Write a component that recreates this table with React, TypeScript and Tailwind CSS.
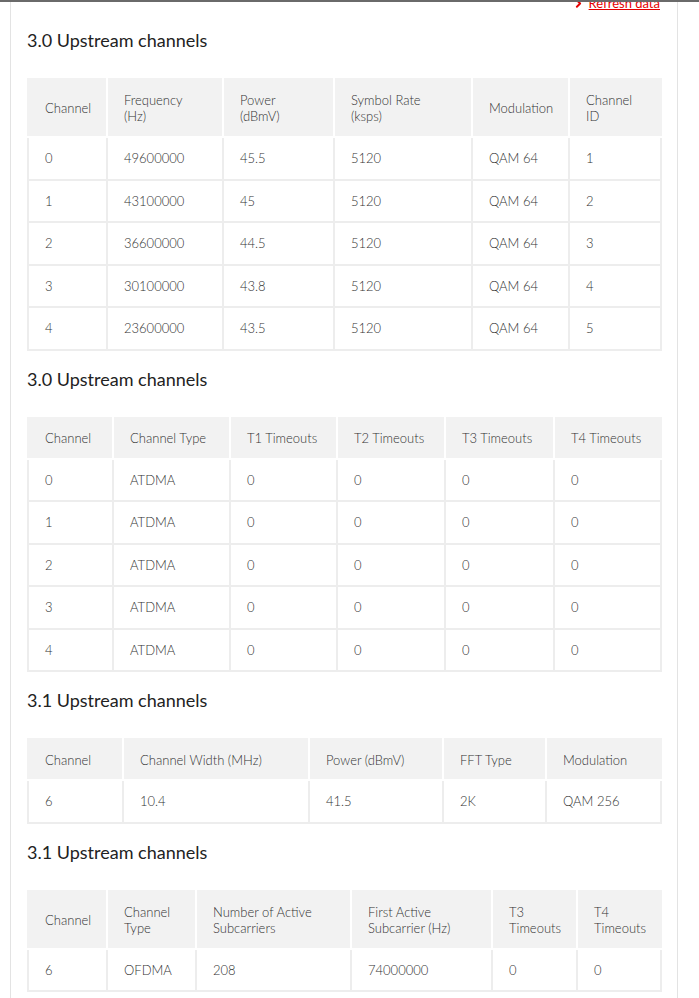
import { Fragment } from "react";
import { ChevronRight } from "lucide-react";

type Table = {
  title: string;
  cols: string[];
  head: string[][];
  rows: string[][];
};

const tables: Table[] = [
  {
    title: "3.0 Upstream channels",
    cols: ["w-[79px]", "w-[116px]", "w-[111px]", "w-[138px]", "w-[97px]", "w-[92px]"],
    head: [["Channel"], ["Frequency", "(Hz)"], ["Power", "(dBmV)"], ["Symbol Rate", "(ksps)"], ["Modulation"], ["Channel", "ID"]],
    rows: [
      ["0", "49600000", "45.5", "5120", "QAM 64", "1"],
      ["1", "43100000", "45", "5120", "QAM 64", "2"],
      ["2", "36600000", "44.5", "5120", "QAM 64", "3"],
      ["3", "30100000", "43.8", "5120", "QAM 64", "4"],
      ["4", "23600000", "43.5", "5120", "QAM 64", "5"],
    ],
  },
  {
    title: "3.0 Upstream channels",
    cols: ["w-[85px]", "w-[117px]", "w-[107px]", "w-[108px]", "w-[109px]", "w-[107px]"],
    head: [["Channel"], ["Channel Type"], ["T1 Timeouts"], ["T2 Timeouts"], ["T3 Timeouts"], ["T4 Timeouts"]],
    rows: [0, 1, 2, 3, 4].map((n) => [String(n), "ATDMA", "0", "0", "0", "0"]),
  },
  {
    title: "3.1 Upstream channels",
    cols: ["w-[95px]", "w-[186px]", "w-[134px]", "w-[103px]", "w-[115px]"],
    head: [["Channel"], ["Channel Width (MHz)"], ["Power (dBmV)"], ["FFT Type"], ["Modulation"]],
    rows: [["6", "10.4", "41.5", "2K", "QAM 256"]],
  },
  {
    title: "3.1 Upstream channels",
    cols: ["w-[79px]", "w-[89px]", "w-[155px]", "w-[141px]", "w-[85px]", "w-[84px]"],
    head: [["Channel"], ["Channel", "Type"], ["Number of Active", "Subcarriers"], ["First Active", "Subcarrier (Hz)"], ["T3", "Timeouts"], ["T4", "Timeouts"]],
    rows: [["6", "OFDMA", "208", "74000000", "0", "0"]],
  },
];

function ChannelTable({ t }: { t: Table }) {
  // headers that never wrap get a touch less padding so the row is 42px like the live page
  const twoLine = t.head.some((h) => h.length > 1);
  return (
    <table className="w-full table-fixed border-collapse text-[13px] text-[#333] font-light">
      <colgroup>
        {t.cols.map((c, i) => (
          <col key={i} className={c} />
        ))}
      </colgroup>
      <thead>
        <tr>
          {t.head.map((h, i) => (
            <th
              key={i}
              className={`bg-[#f2f2f2] border-2 border-white first:border-l-[#f2f2f2] last:border-r-[#f2f2f2] border-t-[#f2f2f2] px-4 text-left font-light leading-4 ${
                twoLine ? "py-3" : "py-[11.5px]"
              }`}
            >
              {h.map((line, j) => (
                <Fragment key={j}>
                  {j > 0 && <br />}
                  {line}
                </Fragment>
              ))}
            </th>
          ))}
        </tr>
      </thead>
      <tbody>
        {t.rows.map((r, i) => (
          <tr key={i}>
            {r.map((v, j) => (
              <td key={j} className="border-2 border-[#ededed] px-4 py-3 leading-[16.5px]">
                {v}
              </td>
            ))}
          </tr>
        ))}
      </tbody>
    </table>
  );
}

export default function App() {
  return (
    <div className="min-h-[998px] bg-white font-['Lato',sans-serif] overflow-hidden">
      <div className="relative z-10 h-[2px] bg-[#6a6a6a]" />
      <div className="ml-[10px] w-[668px] min-h-[996px] border-x border-[#e3e3e3] pl-4 pr-[17px] pb-6 flex flex-col">
        <div className="-mt-[7px] flex justify-end">
          <a href="#" className="flex items-center gap-1 text-[13px] leading-4 text-[#e60000] underline">
            <ChevronRight size={13} strokeWidth={3.5} />
            Refresh data
          </a>
        </div>
        {tables.map((t, i) => (
          <div key={i} className={i === 0 ? "mt-[16px]" : "mt-[15px]"}>
            <h2 className="text-[18px] leading-[27px] text-[#222] mb-6">{t.title}</h2>
            <ChannelTable t={t} />
          </div>
        ))}
      </div>
    </div>
  );
}
